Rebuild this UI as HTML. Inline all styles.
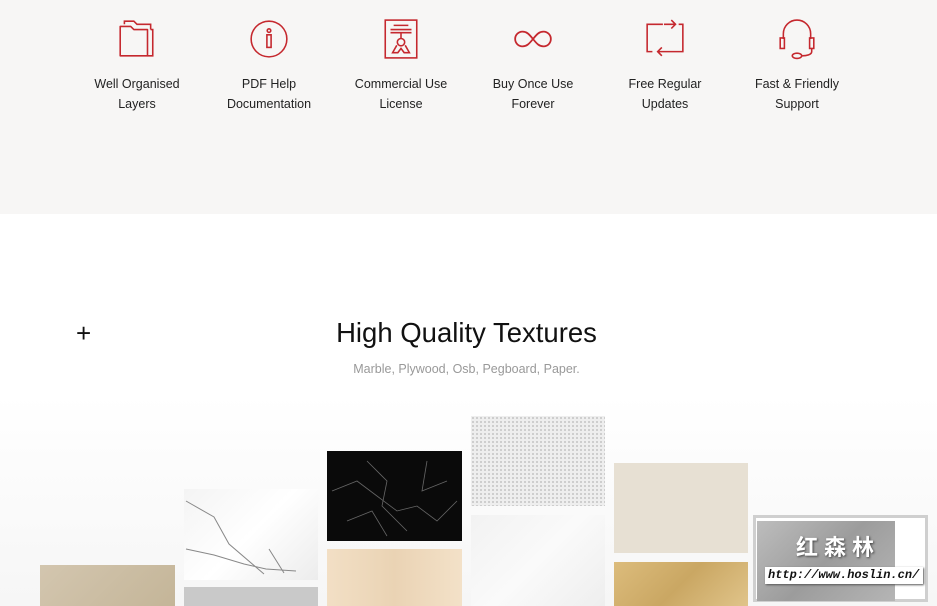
<!DOCTYPE html>
<html><head><meta charset="utf-8"><style>
*{margin:0;padding:0;box-sizing:border-box}
body{width:937px;height:606px;overflow:hidden;background:#fff;font-family:"Liberation Sans",sans-serif;position:relative}
.top{position:absolute;left:0;top:0;width:937px;height:214px;background:#f7f6f5}
.feat{position:absolute;top:18px;width:132px;text-align:center;color:#222;font-size:12.5px;line-height:20px}
.feat svg{display:block;margin:0 auto 14px;width:42px;height:42px}
.t{position:absolute;}
.low{position:absolute;left:0;top:395px;width:937px;height:211px;background:linear-gradient(#fff,#f6f6f6)}
</style></head><body>
<div class="top"></div>
<div class="feat" style="left:71px;"><svg viewBox="0 0 40 40" fill="none" stroke="#c5282e" stroke-width="1.5"><path d="M4 8h10l3 3h13v25H4z" stroke-linejoin="round"/><path d="M8 6V3h9l3 3h13v5M33 11h2v25H30"/></svg>Well Organised<br>Layers</div>
<div class="feat" style="left:203px;"><svg viewBox="0 0 40 40" fill="none" stroke="#c5282e" stroke-width="1.5"><circle cx="20" cy="20" r="17"/><circle cx="20" cy="12" r="1.7"/><rect x="18" y="16" width="4" height="12"/></svg>PDF Help<br>Documentation</div>
<div class="feat" style="left:335px;"><svg viewBox="0 0 40 40" fill="none" stroke="#c5282e" stroke-width="1.5"><rect x="5" y="2" width="30" height="36"/><path d="M13 7h14M10 11h20M10 14h20M20 14v6"/><circle cx="20" cy="23" r="3.5"/><path d="M16 26l-4 7h5l3-4 3 4h5l-4-7"/></svg>Commercial Use<br>License</div>
<div class="feat" style="left:467px;"><svg viewBox="0 0 40 40" fill="none" stroke="#c5282e" stroke-width="1.7"><path d="M20 20c-4-5-6-7-10-7a7 7 0 0 0 0 14c4 0 6-2 10-7s6-7 10-7a7 7 0 0 1 0 14c-4 0-6-2-10-7z"/></svg>Buy Once Use<br>Forever</div>
<div class="feat" style="left:599px;"><svg viewBox="0 0 40 40" fill="none" stroke="#c5282e" stroke-width="1.5"><path d="M18 6H3v26h5M14 32h23V6h-4M19 6h11M26 2l4 4-4 4M17 28l-4 4 4 4M13 32h8"/></svg>Free Regular<br>Updates</div>
<div class="feat" style="left:731px;"><svg viewBox="0 0 40 40" fill="none" stroke="#c5282e" stroke-width="1.5"><path d="M7 20v-5a13 13 0 0 1 26 0v5"/><rect x="4" y="19" width="4" height="10"/><rect x="32" y="19" width="4" height="10"/><path d="M34 29v3c0 3-5 4-9 4"/><ellipse cx="20" cy="36" rx="4.5" ry="2.5"/></svg>Fast &amp; Friendly<br>Support</div>

<div class="t" style="left:76px;top:318px;font-size:26px;font-weight:300;color:#111">+</div>
<div class="t" style="left:0;width:933px;top:317px;text-align:center;font-size:27.5px;color:#111">High Quality Textures</div>
<div class="t" style="left:0;width:933px;top:362px;text-align:center;font-size:12.5px;color:#999">Marble, Plywood, Osb, Pegboard, Paper.</div>

<div class="low"></div>
<div class="t" style="left:40px;top:565px;width:135px;height:41px;background:linear-gradient(135deg,#d3c6af,#c4b598)"></div>
<div class="t" style="left:184px;top:489px;width:134px;height:91px;background:linear-gradient(135deg,#f4f4f4,#fff 50%,#ececec)">
<svg width="134" height="91" style="position:absolute"><path d="M2 12 L30 28 L45 55 L80 85 M2 60 L30 66 L60 75 L82 80 L112 82 M85 60 L100 84" stroke="#888" stroke-width="1" fill="none"/></svg></div>
<div class="t" style="left:184px;top:587px;width:134px;height:19px;background:#c9c9c9"></div>
<div class="t" style="left:327px;top:451px;width:135px;height:90px;background:#0a0a0a">
<svg width="135" height="90" style="position:absolute"><path d="M5 40 L30 30 L50 45 L70 60 L90 55 L110 70 L130 50 M40 10 L60 30 L55 55 L80 80 M100 10 L95 40 L120 30 M20 70 L45 60 L60 85" stroke="#666" stroke-width=".8" fill="none"/></svg></div>
<div class="t" style="left:327px;top:549px;width:135px;height:57px;background:linear-gradient(90deg,#f2dfc5,#ead3b4,#f3e1c8)"></div>
<div class="t" style="left:471px;top:416px;width:134px;height:90px;background-color:#eeeeee;background-image:radial-gradient(circle,#c8c8c8 0.8px,transparent 1.2px);background-size:4px 4px"></div>
<div class="t" style="left:471px;top:515px;width:134px;height:91px;background:linear-gradient(135deg,#f2f2f2,#fafafa,#eeeeee)"></div>
<div class="t" style="left:614px;top:463px;width:134px;height:90px;background:#e7e0d3"></div>
<div class="t" style="left:614px;top:562px;width:134px;height:44px;background:linear-gradient(135deg,#dcbc7c,#caa763,#e0c48a)"></div>
<div class="t" style="left:753px;top:515px;width:175px;height:87px;background:#fff;border:3px solid #cfcfcf"></div>
<div class="t" style="left:757px;top:521px;width:138px;height:80px;background:linear-gradient(135deg,#bdbdbd,#9c9c9c,#b5b5b5)"></div>
<div class="t" style="left:796px;top:530px;font-size:22px;font-weight:bold;color:#fff;letter-spacing:6px;font-family:'Liberation Sans','Noto Sans CJK SC',sans-serif;text-shadow:1px 1px 2px #444">红森林</div>
<div class="t" style="left:765px;top:567px;width:158px;height:17px;background:#fff;font-family:'Liberation Mono',monospace;font-style:italic;font-weight:bold;font-size:12px;line-height:17px;padding-left:3px;color:#111;box-shadow:1px 1px 2px #555">http://www.hoslin.cn/</div>
</body></html>
